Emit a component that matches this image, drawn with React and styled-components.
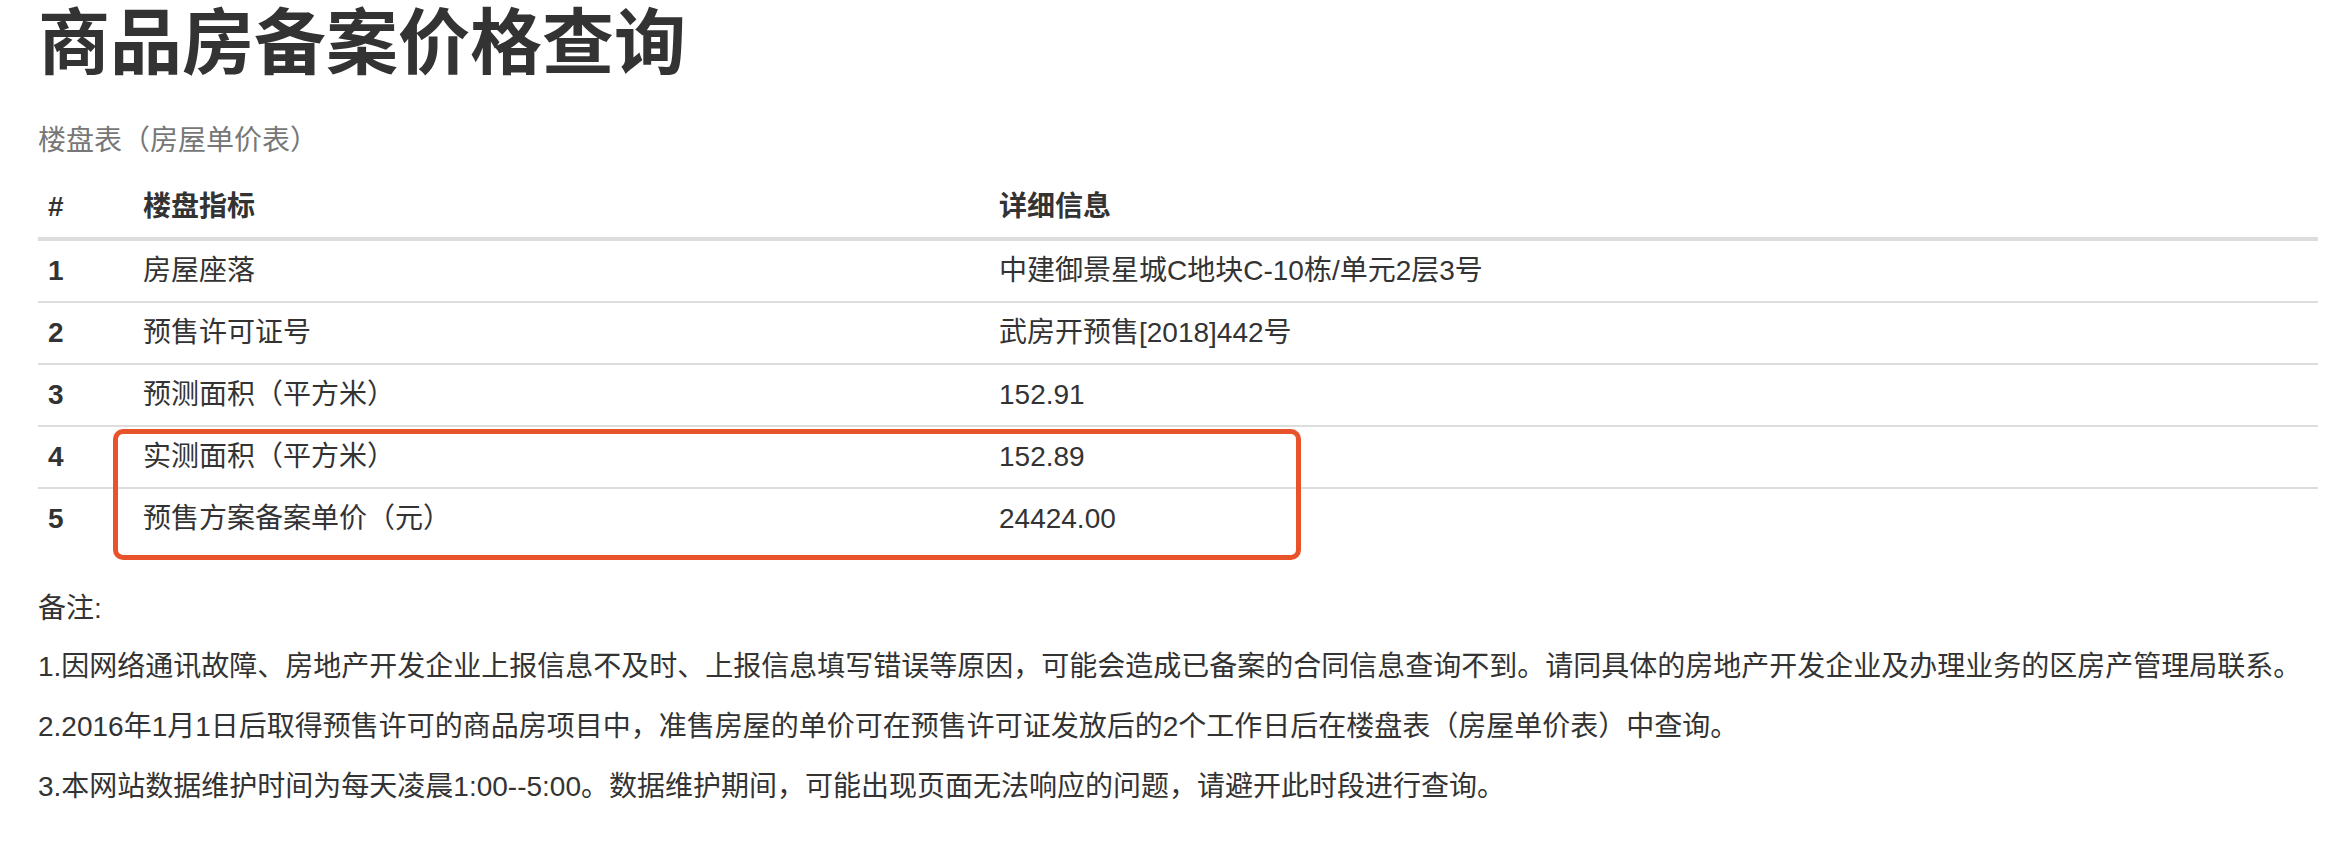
import React from 'react';
import styled, { createGlobalStyle } from 'styled-components';

const GlobalStyle = createGlobalStyle`
	body{
		margin:0;
		background:#fff;
		color:#333;
		font-family:"Liberation Sans", "Noto Sans CJK SC", sans-serif;
		font-size:28px;
		line-height:40px;
	}
`;

const Page = styled.div`
	padding:3px 34px 0 38px;
`;

const Title = styled.h1`
	margin:0 0 22px;
	font-size:72px;
	line-height:80px;
	font-weight:700;
	color:#333;
`;

const TableWrap = styled.div`
	position:relative;
	margin-bottom:40px;
`;

const Table = styled.table`
	width:100%;
	border-collapse:collapse;
	table-layout:fixed;
	caption{
		caption-side:top;
		text-align:left;
		color:#777;
		padding:16px 0;
	}
	th{
		text-align:left;
		padding:10px;
		font-weight:700;
		border-bottom:4px solid #ddd;
	}
	td{
		padding:10px;
		border-top:2px solid #ddd;
	}
	tbody tr:first-child td{
		border-top:none;
	}
`;

const Num = styled.td`
	font-weight:700;
`;

// 标注框（覆盖在第4、5行之上）
const Highlight = styled.div`
	position:absolute;
	left:75px;
	top:324px;
	width:1188px;
	height:131px;
	box-sizing:border-box;
	border:5px solid #e9532b;
	border-radius:10px;
	pointer-events:none;
`;

const Notes = styled.div`
	p{
		margin:0 0 20px;
	}
	p:first-child{
		margin-top:3px;
		margin-bottom:18px;
	}
`;

const rows = [
	['房屋座落', '中建御景星城C地块C-10栋/单元2层3号'],
	['预售许可证号', '武房开预售[2018]442号'],
	['预测面积（平方米）', '152.91'],
	['实测面积（平方米）', '152.89'],
	['预售方案备案单价（元）', '24424.00'],
];

const notes = [
	'1.因网络通讯故障、房地产开发企业上报信息不及时、上报信息填写错误等原因，可能会造成已备案的合同信息查询不到。请同具体的房地产开发企业及办理业务的区房产管理局联系。',
	'2.2016年1月1日后取得预售许可的商品房项目中，准售房屋的单价可在预售许可证发放后的2个工作日后在楼盘表（房屋单价表）中查询。',
	'3.本网站数据维护时间为每天凌晨1:00--5:00。数据维护期间，可能出现页面无法响应的问题，请避开此时段进行查询。',
];

const App = () => {
	return (
		<Page>
			<GlobalStyle />
			<Title>商品房备案价格查询</Title>
			<TableWrap>
				<Table>
					<caption>楼盘表（房屋单价表）</caption>
					<colgroup>
						<col style={{ width: 95 }} />
						<col style={{ width: 856 }} />
						<col />
					</colgroup>
					<thead>
						<tr>
							<th>#</th>
							<th>楼盘指标</th>
							<th>详细信息</th>
						</tr>
					</thead>
					<tbody>
						{rows.map((r, i) => (
							<tr key={i}>
								<Num>{i + 1}</Num>
								<td>{r[0]}</td>
								<td>{r[1]}</td>
							</tr>
						))}
					</tbody>
				</Table>
				<Highlight />
			</TableWrap>
			<Notes>
				<p>备注:</p>
				{notes.map((n, i) => <p key={i}>{n}</p>)}
			</Notes>
		</Page>
	);
};

export default App;
